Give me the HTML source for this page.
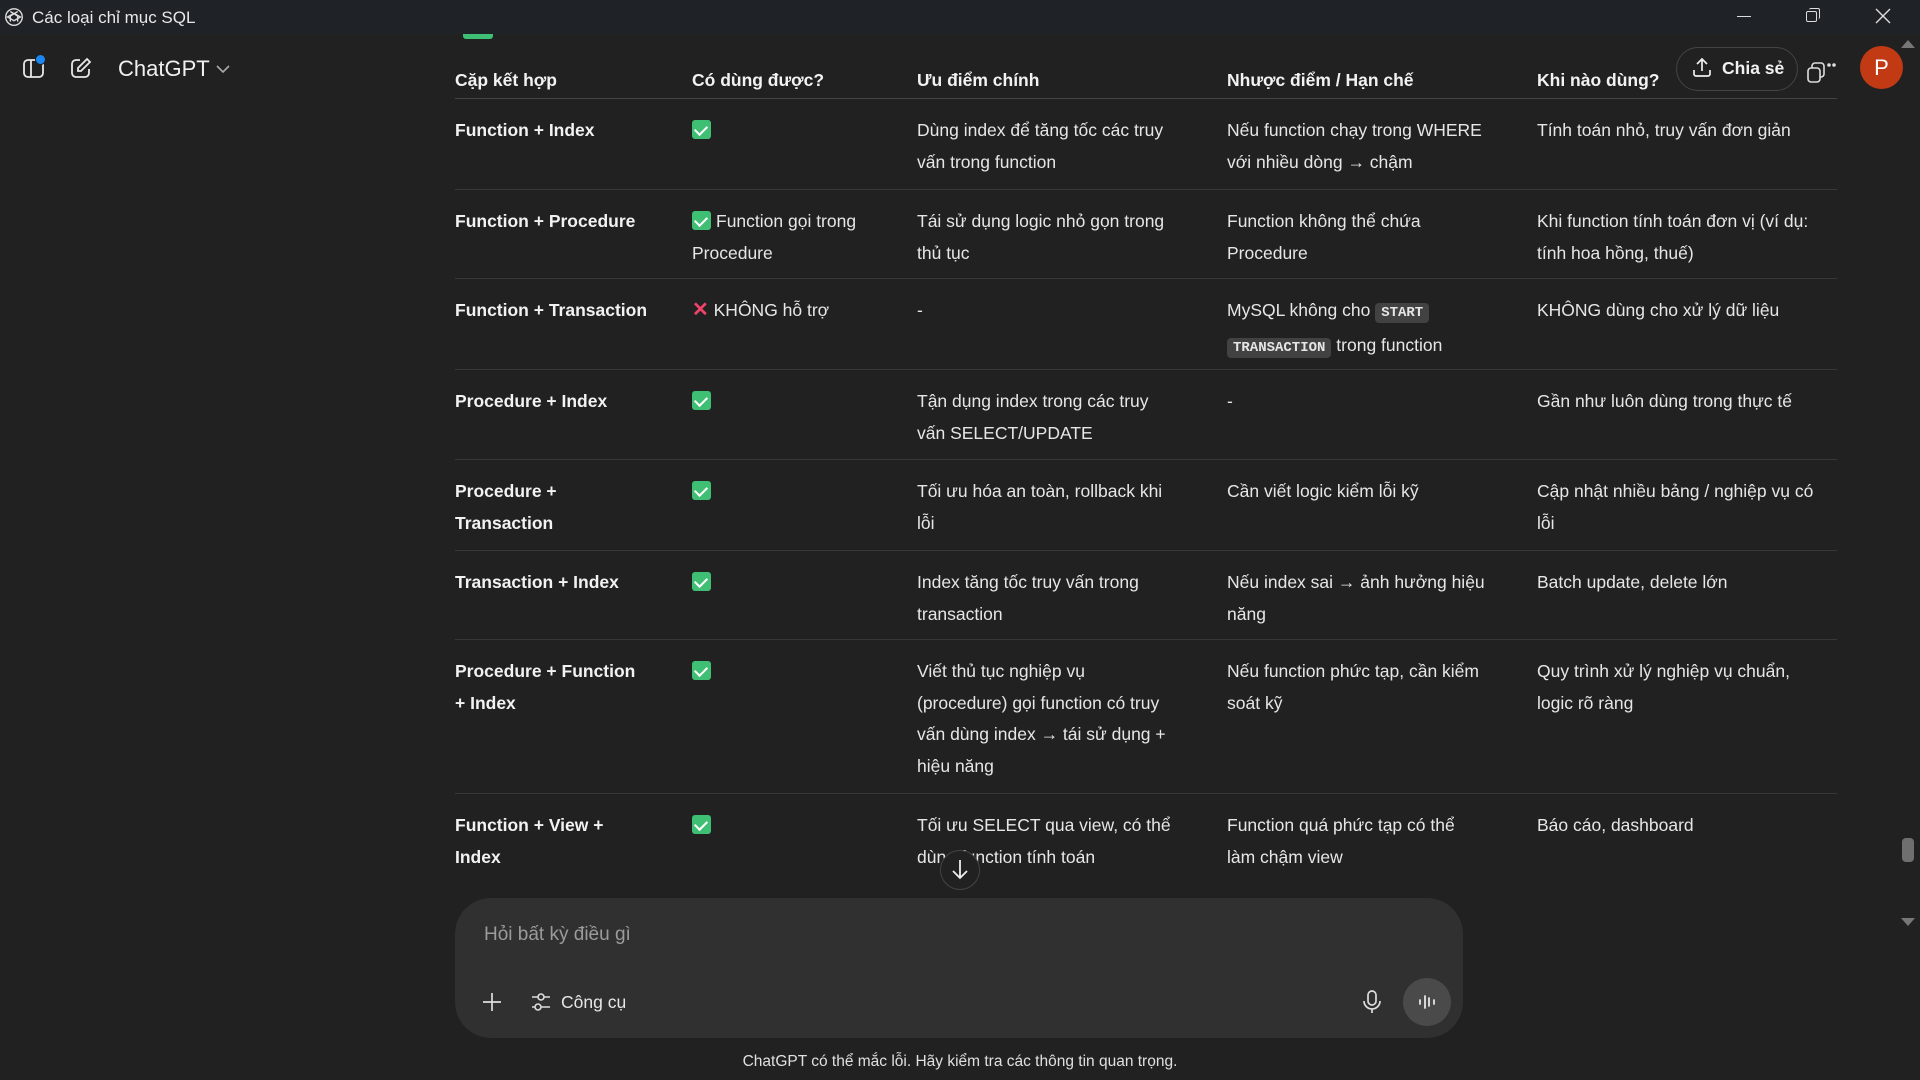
<!DOCTYPE html>
<html><head><meta charset="utf-8"><style>
*{margin:0;padding:0;box-sizing:border-box}
body{width:1920px;height:1080px;overflow:hidden;background:#212121;color:#ececec;font-family:"Liberation Sans","Noto Sans CJK JP",sans-serif;position:relative}
.tb{position:absolute;left:0;top:0;width:1920px;height:34px;background:#1f2226}
.tb .t{position:absolute;left:32px;top:8px;font-size:17px;color:#e8e8e8}
.abs{position:absolute}
.row{position:absolute;left:455px;width:1382px;border-bottom:1px solid #383838}
.c{position:absolute;top:0;font-size:17.5px;line-height:31.5px;white-space:nowrap;color:#e6e6e6}
.b{font-weight:bold;color:#f2f2f2}
.ck{display:inline-block;width:19px;height:19px;background:#3fbf74;border-radius:3px;vertical-align:-3px;position:relative;margin-right:5px}
.ck:after{content:"";position:absolute;left:5px;top:3px;width:6px;height:10px;border:solid #fff;border-width:0 2.5px 2.5px 0;transform:rotate(45deg)}
code{font-family:"Liberation Mono",monospace;font-size:14px;font-weight:bold;background:#424242;border-radius:4px;padding:2px 6px;color:#e6e6e6}
</style></head><body>
<div class="tb"><svg class="abs" style="left:3px;top:6px" width="22" height="22" viewBox="0 0 24 24" fill="none" stroke="#ddd" stroke-width="1.5"><circle cx="12" cy="12" r="9"/><path d="M8 6l8 5v6M16 6L8 11v6M5 12l7-4 7 4-7 4z"/></svg><div class="t">Các loại chỉ mục SQL</div>
<div class="abs" style="left:1737px;top:16px;width:14px;height:1px;background:#ddd"></div>
<div class="abs" style="left:1806px;top:11px;width:11px;height:11px;border:1.3px solid #ddd;border-radius:2px"></div>
<div class="abs" style="left:1809px;top:8px;width:11px;height:11px;border-top:1.3px solid #ddd;border-right:1.3px solid #ddd;border-radius:2px"></div>
<svg class="abs" style="left:1875px;top:8px" width="16" height="16" stroke="#ddd" stroke-width="1.4"><path d="M1 1L15 15M15 1L1 15"/></svg>
</div>
<div class="abs" style="left:463px;top:34px;width:30px;height:5px;background:#3fbf74;border-radius:0 0 3px 3px"></div>
<svg class="abs" style="left:22px;top:57px" width="24" height="22" fill="none" stroke="#e8e8e8" stroke-width="1.8"><rect x="2" y="3" width="19" height="17" rx="4"/><path d="M9 3v17"/></svg>
<div class="abs" style="left:35px;top:54px;width:11px;height:11px;border-radius:50%;background:#1b87f5;border:1px solid #212121"></div>
<svg class="abs" style="left:70px;top:57px" width="22" height="22" fill="none" stroke="#e8e8e8" stroke-width="1.8"><path d="M10 3H6a4 4 0 0 0-4 4v9a4 4 0 0 0 4 4h9a4 4 0 0 0 4-4v-4"/><path d="M17 2l3 3-9 9H8v-3z"/></svg>
<div class="abs" style="left:118px;top:56px;font-size:22px;color:#f0f0f0">ChatGPT</div>
<svg class="abs" style="left:216px;top:65px" width="14" height="9" fill="none" stroke="#aaa" stroke-width="1.6"><path d="M1 1l6 6 6-6"/></svg>
<div class="abs" style="left:1676px;top:47px;width:122px;height:44px;border:1px solid #444;border-radius:22px"></div>
<svg class="abs" style="left:1692px;top:57px" width="20" height="22" fill="none" stroke="#eee" stroke-width="1.7"><path d="M10 14V3M5 7l5-5 5 5M2 13v4a2 2 0 0 0 2 2h12a2 2 0 0 0 2-2v-4"/></svg>
<div class="abs" style="left:1722px;top:58px;font-size:17.5px;font-weight:bold;color:#f0f0f0">Chia sẻ</div>
<svg class="abs" style="left:1806px;top:60px" width="30" height="26" fill="none" stroke="#ddd" stroke-width="1.6"><rect x="2" y="8" width="12" height="14" rx="3"/><path d="M6 8V6a3 3 0 0 1 3-3h6a3 3 0 0 1 3 3v8a3 3 0 0 1-3 3h-1"/><circle cx="23" cy="5" r="1" fill="#ddd"/><circle cx="28" cy="5" r="1" fill="#ddd"/></svg>
<div class="abs" style="left:1860px;top:46px;width:43px;height:43px;border-radius:50%;background:#c23a14;color:#fff;font-size:22px;text-align:center;line-height:43px">P</div>
<div class="abs" style="left:1901px;top:40px;width:0;height:0;border-left:7px solid transparent;border-right:7px solid transparent;border-bottom:8px solid #777"></div>
<div class="abs" style="left:1902px;top:838px;width:12px;height:24px;border-radius:4px;background:#6f6f6f"></div>
<div class="abs" style="left:1901px;top:918px;width:0;height:0;border-left:7px solid transparent;border-right:7px solid transparent;border-top:8px solid #777"></div>
<div class="row" style="top:65px;height:34px;border-color:#444">
<div class="c b" style="left:0">Cặp kết hợp</div><div class="c b" style="left:237px">Có dùng được?</div><div class="c b" style="left:462px">Ưu điểm chính</div><div class="c b" style="left:772px">Nhược điểm / Hạn chế</div><div class="c b" style="left:1082px">Khi nào dùng?</div></div>
<div class="row" style="top:99px;height:91px"><div style="position:relative;top:16px">
<div class="c b" style="left:0">Function + Index</div><div class="c" style="left:237px"><span class="ck"></span></div><div class="c" style="left:462px">Dùng index để tăng tốc các truy<br>vấn trong function</div><div class="c" style="left:772px">Nếu function chạy trong WHERE<br>với nhiều dòng → chậm</div><div class="c" style="left:1082px">Tính toán nhỏ, truy vấn đơn giản</div></div></div>
<div class="row" style="top:190px;height:89px"><div style="position:relative;top:16px">
<div class="c b" style="left:0">Function + Procedure</div><div class="c" style="left:237px"><span class="ck"></span>Function gọi trong<br>Procedure</div><div class="c" style="left:462px">Tái sử dụng logic nhỏ gọn trong<br>thủ tục</div><div class="c" style="left:772px">Function không thể chứa<br>Procedure</div><div class="c" style="left:1082px">Khi function tính toán đơn vị (ví dụ:<br>tính hoa hồng, thuế)</div></div></div>
<div class="row" style="top:279px;height:91px"><div style="position:relative;top:16px">
<div class="c b" style="left:0">Function + Transaction</div><div class="c" style="left:237px"><span style="color:#f0436a;font-weight:bold;font-size:20px">✕</span> KHÔNG hỗ trợ</div><div class="c" style="left:462px">-</div><div class="c" style="left:772px">MySQL không cho <code>START</code><br><code>TRANSACTION</code> trong function</div><div class="c" style="left:1082px">KHÔNG dùng cho xử lý dữ liệu</div></div></div>
<div class="row" style="top:370px;height:90px"><div style="position:relative;top:16px">
<div class="c b" style="left:0">Procedure + Index</div><div class="c" style="left:237px"><span class="ck"></span></div><div class="c" style="left:462px">Tận dụng index trong các truy<br>vấn SELECT/UPDATE</div><div class="c" style="left:772px">-</div><div class="c" style="left:1082px">Gần như luôn dùng trong thực tế</div></div></div>
<div class="row" style="top:460px;height:91px"><div style="position:relative;top:16px">
<div class="c b" style="left:0">Procedure +<br>Transaction</div><div class="c" style="left:237px"><span class="ck"></span></div><div class="c" style="left:462px">Tối ưu hóa an toàn, rollback khi<br>lỗi</div><div class="c" style="left:772px">Cần viết logic kiểm lỗi kỹ</div><div class="c" style="left:1082px">Cập nhật nhiều bảng / nghiệp vụ có<br>lỗi</div></div></div>
<div class="row" style="top:551px;height:89px"><div style="position:relative;top:16px">
<div class="c b" style="left:0">Transaction + Index</div><div class="c" style="left:237px"><span class="ck"></span></div><div class="c" style="left:462px">Index tăng tốc truy vấn trong<br>transaction</div><div class="c" style="left:772px">Nếu index sai → ảnh hưởng hiệu<br>năng</div><div class="c" style="left:1082px">Batch update, delete lớn</div></div></div>
<div class="row" style="top:640px;height:154px"><div style="position:relative;top:16px">
<div class="c b" style="left:0">Procedure + Function<br>+ Index</div><div class="c" style="left:237px"><span class="ck"></span></div><div class="c" style="left:462px">Viết thủ tục nghiệp vụ<br>(procedure) gọi function có truy<br>vấn dùng index → tái sử dụng +<br>hiệu năng</div><div class="c" style="left:772px">Nếu function phức tạp, cần kiểm<br>soát kỹ</div><div class="c" style="left:1082px">Quy trình xử lý nghiệp vụ chuẩn,<br>logic rõ ràng</div></div></div>
<div class="row" style="top:794px;height:100px;border:none"><div style="position:relative;top:16px">
<div class="c b" style="left:0">Function + View +<br>Index</div><div class="c" style="left:237px"><span class="ck"></span></div><div class="c" style="left:462px">Tối ưu SELECT qua view, có thể<br>dùng function tính toán</div><div class="c" style="left:772px">Function quá phức tạp có thể<br>làm chậm view</div><div class="c" style="left:1082px">Báo cáo, dashboard</div></div></div>
<div class="abs" style="left:940px;top:850px;width:40px;height:40px;border-radius:50%;background:#212121;border:1px solid #444"></div>
<svg class="abs" style="left:950px;top:858px" width="20" height="24" fill="none" stroke="#eee" stroke-width="1.8"><path d="M10 2v18M3 13l7 7 7-7"/></svg>
<div class="abs" style="left:455px;top:898px;width:1008px;height:140px;border-radius:36px;background:#303030"></div>
<div class="abs" style="left:484px;top:924px;font-size:19px;color:#9b9b9b">Hỏi bất kỳ điều gì</div>
<svg class="abs" style="left:482px;top:992px" width="20" height="20" stroke="#ddd" stroke-width="1.7"><path d="M10 1v18M1 10h18"/></svg>
<svg class="abs" style="left:530px;top:990px" width="22" height="24" fill="none" stroke="#ddd" stroke-width="1.6"><path d="M2 7h6M14 7h6M2 17h3M11 17h9"/><circle cx="11" cy="7" r="3"/><circle cx="8" cy="17" r="3"/></svg>
<div class="abs" style="left:561px;top:992px;font-size:17.5px;color:#e6e6e6">Công cụ</div>
<svg class="abs" style="left:1362px;top:990px" width="20" height="24" fill="none" stroke="#ddd" stroke-width="1.7"><rect x="6" y="1" width="8" height="14" rx="4"/><path d="M2 11a8 8 0 0 0 16 0M10 19v4"/></svg>
<div class="abs" style="left:1403px;top:978px;width:48px;height:48px;border-radius:50%;background:#4a4a4a"></div>
<svg class="abs" style="left:1417px;top:992px" width="20" height="20" stroke="#eee" stroke-width="1.7" stroke-linecap="round"><path d="M3 8v4M8 4v12M12 6v8M17 8v4"/></svg>
<div class="abs" style="left:0;width:1920px;top:1053px;text-align:center;font-size:15.5px;color:#e0e0e0">ChatGPT có thể mắc lỗi. Hãy kiểm tra các thông tin quan trọng.</div>
</body></html>
